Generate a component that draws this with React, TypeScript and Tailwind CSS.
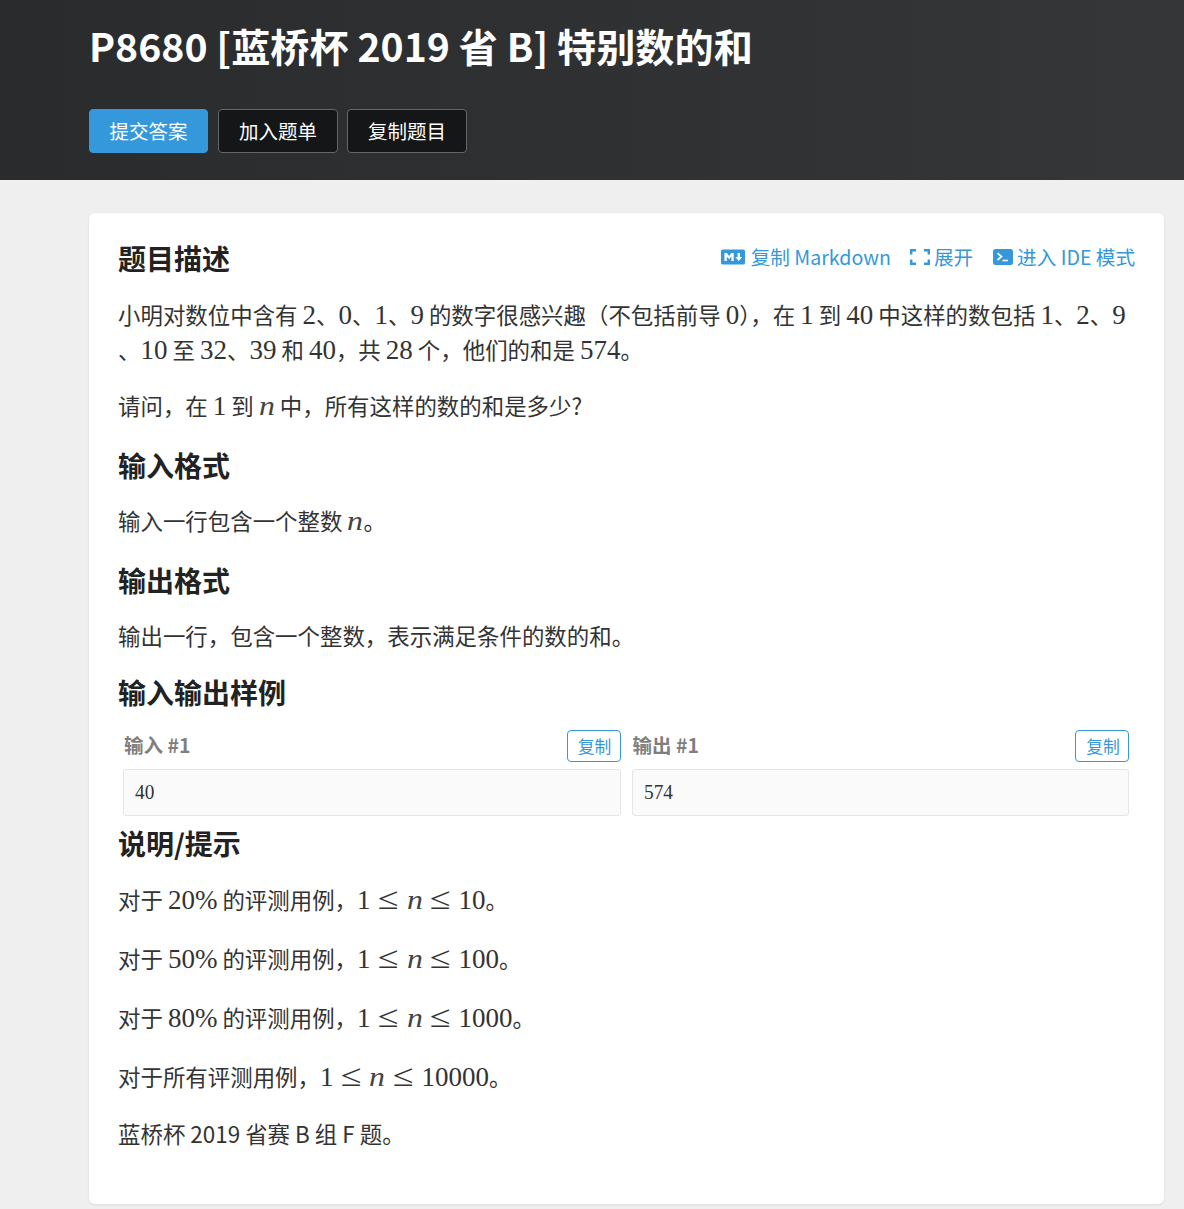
import { FaMarkdown } from "react-icons/fa";

const M = ({ children }: { children: React.ReactNode }) => (
  <span className="font-['Liberation_Serif',serif] text-[27px] leading-[0]">{children}</span>
);
const N = () => (
  <span className="inline-block w-[16px] scale-x-[1.18] text-center font-['Liberation_Serif',serif] text-[27px] leading-[0] text-[#444] italic">n</span>
);
const H = ({ children, cls }: { children: React.ReactNode; cls: string }) => (
  <h2 className={`text-[28px] font-bold leading-[40px] text-[#222] ${cls}`}>{children}</h2>
);
const Le = () => (
  <span className="mx-[7.5px] inline-block w-[21px] scale-x-[1.22] text-center font-['Liberation_Serif',serif] text-[31px] leading-[0]">≤</span>
);
const Btn = ({ children, blue }: { children: React.ReactNode; blue?: boolean }) => (
  <div className={`flex h-[44px] items-center justify-center rounded-[4px] border text-[19.5px] text-white ${blue ? "w-[119px] border-[#3498db] bg-[#3498db]" : "w-[120px] border-[#666] bg-[#141618]"}`}>
    {children}
  </div>
);
const Sample = ({ label, value }: { label: string; value: string }) => (
  <div className="min-w-0">
    <div className="flex h-[32px] items-center justify-between">
      <span className="pb-[3px] pl-px text-[19.5px] font-bold text-[#7f7f7f]">{label}</span>
      <span className="flex h-[32px] w-[54px] items-center justify-center rounded-[4px] border border-[#3498db] pl-[2px] text-[16.8px] text-[#3498db]">复制</span>
    </div>
    <div className="mt-[7px] flex h-[47px] items-center rounded-[3px] border border-[#e6e6e6] bg-[#fafafa] pl-[11px] font-['Liberation_Serif',serif] text-[#333]">
      <span className="origin-left scale-x-[0.92] text-[21px]">{value}</span>
    </div>
  </div>
);
const Range = ({ pct, max, first }: { pct: string; max: string; first?: boolean }) => (
  <p className={`${first ? "mt-[18px]" : "mt-[22px]"} h-[37px] leading-[37px]`}>
    对于 <M>{pct}%</M> 的评测用例，<M>1</M><Le /><N /><Le /><M>{max}</M>。
  </p>
);

const ExpandIcon = () => (
  <svg className="ml-[19px] h-[16px] w-[20px]" viewBox="0 0 20 16" fill="none" stroke="currentColor" strokeWidth="2.4">
    <path d="M6 1.2H1.2V5.5M14 1.2H18.8V5.5M6 14.8H1.2V10.5M14 14.8H18.8V10.5" />
  </svg>
);
const TerminalIcon = () => (
  <svg className="ml-[20px] mr-[4px] h-[16px] w-[20px]" viewBox="0 0 20 16">
    <rect width="20" height="16" rx="2.5" fill="currentColor" />
    <path d="M4.5 4.2L8.5 7.6L4.5 11" fill="none" stroke="#fff" strokeWidth="1.7" />
    <path d="M9.5 11.5H15" fill="none" stroke="#fff" strokeWidth="1.6" />
  </svg>
);

export default function App() {
  return (
    <div className="min-h-[1209px] bg-[#efefef] font-['Noto_Sans_CJK_SC','Noto_Sans',sans-serif] text-[#333]">
      <header className="h-[180px] bg-gradient-to-r from-[#292b2d] to-[#343638] pl-[89px]">
        <h1 className="pt-[16px] text-[39.15px] font-bold leading-[58px] text-white">P8680 [蓝桥杯 2019 省 B] 特别数的和</h1>
        <div className="mt-[35px] flex gap-[10px]">
          <Btn blue>提交答案</Btn>
          <div className="flex gap-[9px]">
            <Btn>加入题单</Btn>
            <Btn>复制题目</Btn>
          </div>
        </div>
      </header>
      <main className="mx-[89px] mt-[33px] h-[991px] w-[1075px] rounded-[6px] bg-white px-[29px] pt-[26px] text-[22.45px] leading-[35px] shadow-[0_1px_3px_rgba(0,0,0,0.08)]">
        <div className="flex items-start justify-between">
          <H cls="-mt-px mb-px">题目描述</H>
          <div className="mt-px flex items-center text-[19.6px] leading-[34px] text-[#3498db]">
            <FaMarkdown className="mr-[6px] h-[24px] w-[24px]" />
            <span>复制 Markdown</span>
            <ExpandIcon />
            <span className="ml-[4px]">展开</span>
            <TerminalIcon />
            <span>进入 IDE 模式</span>
          </div>
        </div>
        <p className="mt-[18px]">
          小明对数位中含有 <M>2</M>、<M>0</M>、<M>1</M>、<M>9</M> 的数字很感兴趣（不包括前导 <M>0</M>），在 <M>1</M> 到 <M>40</M> 中这样的数包括 <M>1</M>、<M>2</M>、<M>9</M>
          <br />
          、<M>10</M> 至 <M>32</M>、<M>39</M> 和 <M>40</M>，共 <M>28</M> 个，他们的和是 <M>574</M>。
        </p>
        <p className="mt-[21px]">请问，在 <M>1</M> 到 <N /> 中，所有这样的数的和是多少?</p>
        <H cls="mt-[22px]">输入格式</H>
        <p className="mt-[18px]">输入一行包含一个整数 <N />。</p>
        <H cls="mt-[22px]">输出格式</H>
        <p className="mt-[18px]">输出一行，包含一个整数，表示满足条件的数的和。</p>
        <H cls="mt-[19px] mb-px">输入输出样例</H>
        <div className="ml-[5px] mr-[6px] mt-[18px] grid grid-cols-2 gap-[11px]">
          <Sample label="输入 #1" value="40" />
          <Sample label="输出 #1" value="574" />
        </div>
        <H cls="mt-[7px] mb-px">说明/提示</H>
        <Range first pct="20" max="10" />
        <Range pct="50" max="100" />
        <Range pct="80" max="1000" />
        <p className="mt-[22px] h-[37px] leading-[37px]">
          对于所有评测用例，<M>1</M><Le /><N /><Le /><M>10000</M>。
        </p>
        <p className="mt-[21px]">蓝桥杯 2019 省赛 B 组 F 题。</p>
      </main>
    </div>
  );
}
